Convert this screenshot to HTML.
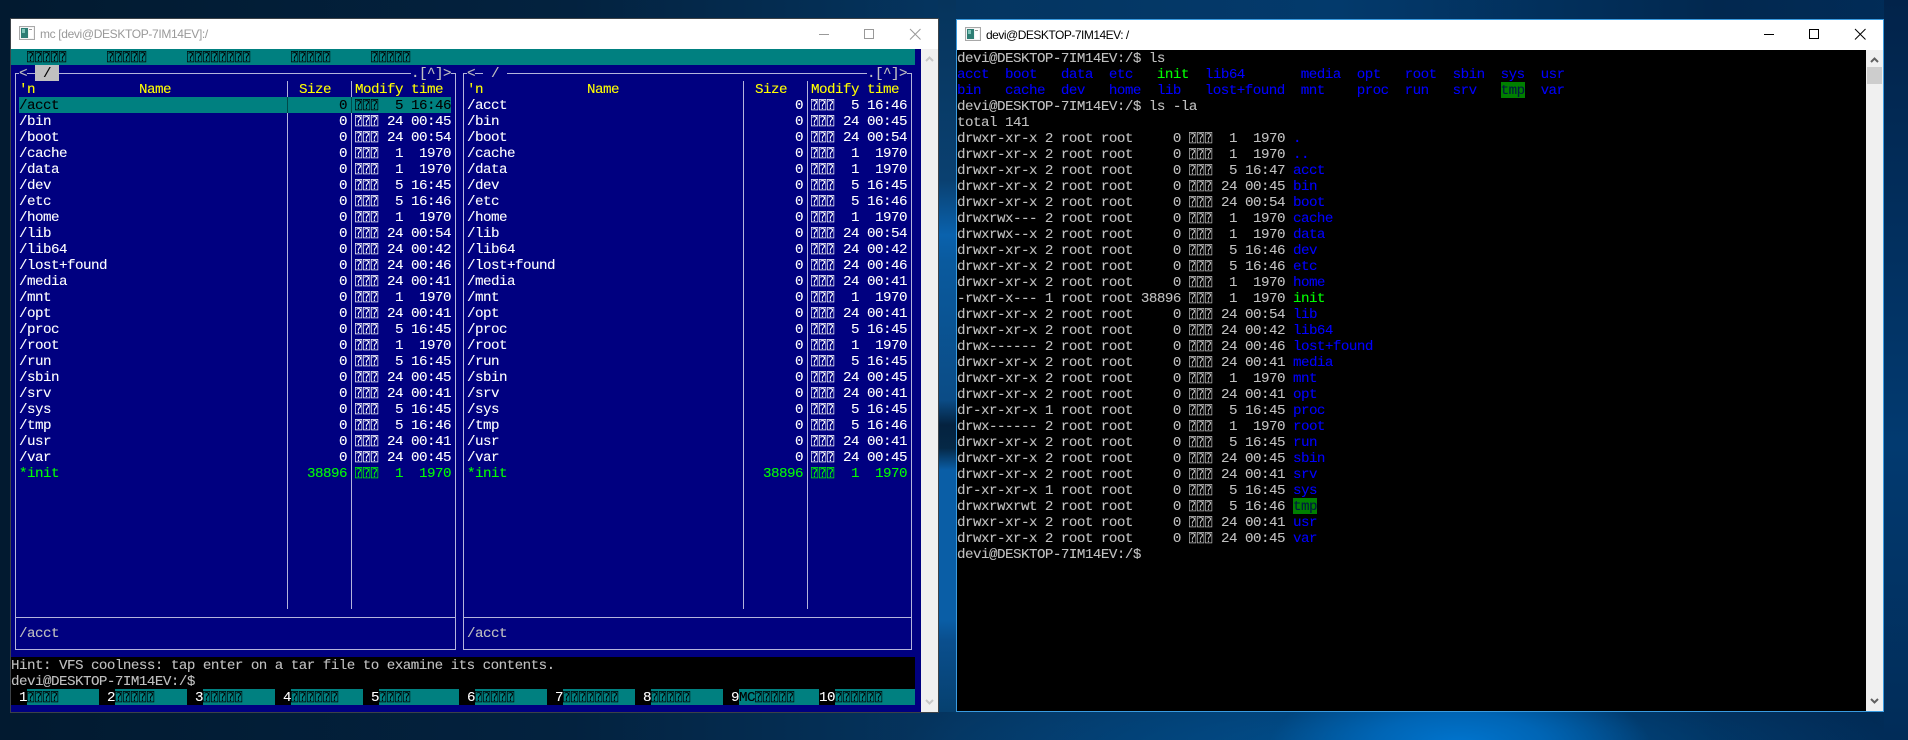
<!DOCTYPE html>
<html><head><meta charset="utf-8"><title>mc</title>
<style>
html,body{margin:0;padding:0;width:1908px;height:740px;overflow:hidden;background:#03213f}
#bg{position:absolute;left:0;top:0;width:1908px;height:740px;background:
radial-gradient(ellipse 190px 70px at 1460px 745px,#0075cf 0%,#0065b5 45%,rgba(0,80,150,0) 100%),
radial-gradient(ellipse 500px 90px at 1400px 750px,#00508f 0%,rgba(0,70,130,0) 100%),
linear-gradient(90deg,#021a30 0%,#03223f 30%,#053560 50%,#033a6c 70%,#02284f 90%,#012c58 100%)}
#gap{position:absolute;left:938px;top:0;width:18px;height:712px;background:linear-gradient(180deg,#06345c 0,#0a4070 180px,#0a62ad 235px,#0a5a9e 262px,#0b4c86 400px,#04223f 425px,#052846 448px,#0a5ea6 470px,#0a5ea6 620px,#0a4f8e 640px,#06406f 712px)}
#edge{position:absolute;left:1884px;top:0;width:24px;height:740px;background:linear-gradient(180deg,#02234a 0,#023a70 60%,#012c58 100%)}
pre{position:absolute;margin:1px 0 0;font:14.2px/16px "Liberation Mono","DejaVu Sans Mono",monospace;letter-spacing:-.52px;white-space:pre;color:#c0c0c0;-webkit-text-stroke:.1px currentColor}
.d{position:absolute}
.w{position:absolute;background:#fff}
pre.t{font-family:"DejaVu Sans Mono","Liberation Mono",monospace;font-size:12px;letter-spacing:.78px;margin-top:0;-webkit-text-stroke:0}
.l{position:absolute;background:#b4b4dc}
.y{color:#ff0}
.wh{color:#fff}
.k{color:#000}
.g{color:#0f0}
.b{color:#00f}
.n{color:#001a40}
.ttl{position:absolute;font:12px/16px "Liberation Sans",sans-serif;white-space:pre}
svg{position:absolute}
</style></head><body>
<div id="bg"></div><div id="gap"></div><div id="edge"></div>

<!-- LEFT WINDOW -->
<div class="w" style="left:10px;top:18px;border:1px solid #3c4248;width:927px;height:693px"></div>
<div class="d" style="left:11px;top:49px;width:910px;height:663px;background:#000080"></div>
<div class="d" style="left:921px;top:49px;width:17px;height:663px;background:#f0f0f0"></div>
<svg style="left:19px;top:26px" width="16" height="14" viewBox="0 0 16 14"><rect x=".5" y=".5" width="15" height="13" fill="#f4f4f4" stroke="#a8a8a8"/><rect x="2" y="2" width="7" height="10" fill="#2e7d74"/><rect x="3" y="3" width="3" height="4" fill="#7fc4b8"/><rect x="10" y="2" width="4" height="10" fill="#fff"/><rect x="10" y="3" width="3" height="1" fill="#999"/></svg>
<div class="ttl" style="left:40px;top:26px;color:#999;letter-spacing:-.35px">mc [devi@DESKTOP-7IM14EV]:/</div>
<svg style="left:815px;top:25px" width="110" height="18" viewBox="815 25 110 18" fill="none" stroke="#999"><path d="M819 34.500h10"/><rect x="864.500" y="29.500" width="9" height="9"/><path d="M910 29l10.500 10.500M920.500 29L910 39.500"/></svg>
<svg style="left:921px;top:49px" width="17" height="663" fill="none" stroke="#c8c8c8" stroke-width="2"><path d="M5 12l3.500-3.500L12 12"/><path d="M5 651l3.500 3.500L12 651"/></svg>

<!-- menu -->
<div class="d" style="left:11px;top:49px;width:904px;height:16px;background:#008080"></div>
<pre class="t k" style="left:27px;top:49px">⍰⍰⍰⍰⍰</pre><pre class="t k" style="left:107px;top:49px">⍰⍰⍰⍰⍰</pre><pre class="t k" style="left:187px;top:49px">⍰⍰⍰⍰⍰⍰⍰⍰</pre><pre class="t k" style="left:291px;top:49px">⍰⍰⍰⍰⍰</pre><pre class="t k" style="left:371px;top:49px">⍰⍰⍰⍰⍰</pre>

<!-- panel 1 frame -->
<div class="l" style="left:15px;top:73px;width:1px;height:577px"></div>
<div class="l" style="left:455px;top:73px;width:1px;height:577px"></div>
<div class="l" style="left:15px;top:73px;width:4px;height:1px"></div>
<div class="l" style="left:27px;top:73px;width:8px;height:1px"></div>
<div class="l" style="left:59px;top:73px;width:352px;height:1px"></div>
<div class="l" style="left:451px;top:73px;width:5px;height:1px"></div>
<div class="l" style="left:15px;top:617px;width:441px;height:1px"></div>
<div class="l" style="left:15px;top:649px;width:441px;height:1px"></div>
<div class="d" style="left:35px;top:65px;width:24px;height:16px;background:#c0c0c0"></div>
<div class="d" style="left:19px;top:97px;width:432px;height:16px;background:#008080"></div>
<div class="l" style="left:287px;top:81px;width:1px;height:528px"></div>
<div class="l" style="left:351px;top:81px;width:1px;height:528px"></div>
<div class="d" style="left:287px;top:97px;width:1px;height:16px;background:#004a4a"></div>
<div class="d" style="left:351px;top:97px;width:1px;height:16px;background:#004a4a"></div>
<pre style="left:19px;top:65px">&lt;</pre><pre class="k" style="left:35px;top:65px"> / </pre><pre style="left:411px;top:65px">.[^]&gt;</pre>
<pre class="y" style="left:19px;top:81px">'n</pre><pre class="y" style="left:139px;top:81px">Name</pre><pre class="y" style="left:299px;top:81px">Size</pre><pre class="y" style="left:355px;top:81px">Modify</pre><pre class="y" style="left:411px;top:81px">time</pre>
<pre class="wh" style="left:19px;top:97px"><span class="k">/acct</span>
/bin
/boot
/cache
/data
/dev
/etc
/home
/lib
/lib64
/lost+found
/media
/mnt
/opt
/proc
/root
/run
/sbin
/srv
/sys
/tmp
/usr
/var
<span class="g">*init</span></pre>
<pre class="wh" style="left:291px;top:97px;text-align:right;width:56px"><span class="k">0</span>
0
0
0
0
0
0
0
0
0
0
0
0
0
0
0
0
0
0
0
0
0
0
<span class="g">38896</span></pre>
<pre class="t wh" style="left:355px;top:97px"><span class="k">⍰⍰⍰</span>
⍰⍰⍰
⍰⍰⍰
⍰⍰⍰
⍰⍰⍰
⍰⍰⍰
⍰⍰⍰
⍰⍰⍰
⍰⍰⍰
⍰⍰⍰
⍰⍰⍰
⍰⍰⍰
⍰⍰⍰
⍰⍰⍰
⍰⍰⍰
⍰⍰⍰
⍰⍰⍰
⍰⍰⍰
⍰⍰⍰
⍰⍰⍰
⍰⍰⍰
⍰⍰⍰
⍰⍰⍰
<span class="g">⍰⍰⍰</span></pre>
<pre class="wh" style="left:387px;top:97px"><span class="k"> 5 16:46</span>
24 00:45
24 00:54
 1  1970
 1  1970
 5 16:45
 5 16:46
 1  1970
24 00:54
24 00:42
24 00:46
24 00:41
 1  1970
24 00:41
 5 16:45
 1  1970
 5 16:45
24 00:45
24 00:41
 5 16:45
 5 16:46
24 00:41
24 00:45
<span class="g"> 1  1970</span></pre>
<pre style="left:19px;top:625px">/acct</pre>

<!-- panel 2 frame -->
<div class="l" style="left:463px;top:73px;width:1px;height:577px"></div>
<div class="l" style="left:911px;top:73px;width:1px;height:577px"></div>
<div class="l" style="left:463px;top:73px;width:4px;height:1px"></div>
<div class="l" style="left:475px;top:73px;width:8px;height:1px"></div>
<div class="l" style="left:507px;top:73px;width:360px;height:1px"></div>
<div class="l" style="left:907px;top:73px;width:5px;height:1px"></div>
<div class="l" style="left:463px;top:617px;width:449px;height:1px"></div>
<div class="l" style="left:463px;top:649px;width:449px;height:1px"></div>
<div class="l" style="left:743px;top:81px;width:1px;height:528px"></div>
<div class="l" style="left:807px;top:81px;width:1px;height:528px"></div>
<pre style="left:467px;top:65px">&lt;</pre><pre style="left:491px;top:65px">/</pre><pre style="left:867px;top:65px">.[^]&gt;</pre>
<pre class="y" style="left:467px;top:81px">'n</pre><pre class="y" style="left:587px;top:81px">Name</pre><pre class="y" style="left:755px;top:81px">Size</pre><pre class="y" style="left:811px;top:81px">Modify</pre><pre class="y" style="left:867px;top:81px">time</pre>
<pre class="wh" style="left:467px;top:97px">/acct
/bin
/boot
/cache
/data
/dev
/etc
/home
/lib
/lib64
/lost+found
/media
/mnt
/opt
/proc
/root
/run
/sbin
/srv
/sys
/tmp
/usr
/var
<span class="g">*init</span></pre>
<pre class="wh" style="left:747px;top:97px;text-align:right;width:56px">0
0
0
0
0
0
0
0
0
0
0
0
0
0
0
0
0
0
0
0
0
0
0
<span class="g">38896</span></pre>
<pre class="t wh" style="left:811px;top:97px">⍰⍰⍰
⍰⍰⍰
⍰⍰⍰
⍰⍰⍰
⍰⍰⍰
⍰⍰⍰
⍰⍰⍰
⍰⍰⍰
⍰⍰⍰
⍰⍰⍰
⍰⍰⍰
⍰⍰⍰
⍰⍰⍰
⍰⍰⍰
⍰⍰⍰
⍰⍰⍰
⍰⍰⍰
⍰⍰⍰
⍰⍰⍰
⍰⍰⍰
⍰⍰⍰
⍰⍰⍰
⍰⍰⍰
<span class="g">⍰⍰⍰</span></pre>
<pre class="wh" style="left:843px;top:97px"> 5 16:46
24 00:45
24 00:54
 1  1970
 1  1970
 5 16:45
 5 16:46
 1  1970
24 00:54
24 00:42
24 00:46
24 00:41
 1  1970
24 00:41
 5 16:45
 1  1970
 5 16:45
24 00:45
24 00:41
 5 16:45
 5 16:46
24 00:41
24 00:45
<span class="g"> 1  1970</span></pre>
<pre style="left:467px;top:625px">/acct</pre>

<!-- hint / prompt / buttons -->
<div class="d" style="left:11px;top:657px;width:904px;height:48px;background:#000"></div>
<pre style="left:11px;top:657px">Hint: VFS coolness: tap enter on a tar file to examine its contents.
devi@DESKTOP-7IM14EV:/$</pre>
<div class="d" style="left:27px;top:689px;width:72px;height:16px;background:#008080"></div>
<div class="d" style="left:115px;top:689px;width:72px;height:16px;background:#008080"></div>
<div class="d" style="left:203px;top:689px;width:72px;height:16px;background:#008080"></div>
<div class="d" style="left:291px;top:689px;width:72px;height:16px;background:#008080"></div>
<div class="d" style="left:379px;top:689px;width:80px;height:16px;background:#008080"></div>
<div class="d" style="left:475px;top:689px;width:72px;height:16px;background:#008080"></div>
<div class="d" style="left:563px;top:689px;width:72px;height:16px;background:#008080"></div>
<div class="d" style="left:651px;top:689px;width:72px;height:16px;background:#008080"></div>
<div class="d" style="left:739px;top:689px;width:80px;height:16px;background:#008080"></div>
<div class="d" style="left:835px;top:689px;width:80px;height:16px;background:#008080"></div>
<pre class="wh" style="left:19px;top:689px">1</pre><pre class="t k" style="left:27px;top:689px">⍰⍰⍰⍰</pre>
<pre class="wh" style="left:107px;top:689px">2</pre><pre class="t k" style="left:115px;top:689px">⍰⍰⍰⍰⍰</pre>
<pre class="wh" style="left:195px;top:689px">3</pre><pre class="t k" style="left:203px;top:689px">⍰⍰⍰⍰⍰</pre>
<pre class="wh" style="left:283px;top:689px">4</pre><pre class="t k" style="left:291px;top:689px">⍰⍰⍰⍰⍰⍰</pre>
<pre class="wh" style="left:371px;top:689px">5</pre><pre class="t k" style="left:379px;top:689px">⍰⍰⍰⍰</pre>
<pre class="wh" style="left:467px;top:689px">6</pre><pre class="t k" style="left:475px;top:689px">⍰⍰⍰⍰⍰</pre>
<pre class="wh" style="left:555px;top:689px">7</pre><pre class="t k" style="left:563px;top:689px">⍰⍰⍰⍰⍰⍰⍰</pre>
<pre class="wh" style="left:643px;top:689px">8</pre><pre class="t k" style="left:651px;top:689px">⍰⍰⍰⍰⍰</pre>
<pre class="wh" style="left:731px;top:689px">9</pre><pre class="k" style="left:739px;top:689px">MC</pre><pre class="t k" style="left:755px;top:689px">⍰⍰⍰⍰⍰</pre>
<pre class="wh" style="left:819px;top:689px">10</pre><pre class="t k" style="left:835px;top:689px">⍰⍰⍰⍰⍰⍰</pre>

<!-- RIGHT WINDOW -->
<div class="w" style="left:956px;top:19px;width:926px;height:691px;border:1px solid #3a9be0"></div>
<div class="d" style="left:957px;top:50px;width:909px;height:661px;background:#000"></div>
<div class="d" style="left:1866px;top:50px;width:17px;height:661px;background:#f0f0f0"></div>
<div class="d" style="left:1867px;top:67px;width:15px;height:17px;background:#cdcdcd"></div>
<svg style="left:965px;top:27px" width="16" height="14" viewBox="0 0 16 14"><rect x=".5" y=".5" width="15" height="13" fill="#f4f4f4" stroke="#a8a8a8"/><rect x="2" y="2" width="7" height="10" fill="#2e7d74"/><rect x="3" y="3" width="3" height="4" fill="#7fc4b8"/><rect x="10" y="2" width="4" height="10" fill="#fff"/><rect x="10" y="3" width="3" height="1" fill="#999"/></svg>
<div class="ttl" style="left:986px;top:27px;color:#000;letter-spacing:-.5px">devi@DESKTOP-7IM14EV: /</div>
<svg style="left:1760px;top:25px" width="110" height="18" viewBox="1760 25 110 18" fill="none" stroke="#000"><path d="M1764 34.500h10"/><rect x="1809.500" y="29.500" width="9" height="9"/><path d="M1855 29l10.500 10.500M1865.500 29L1855 39.500"/></svg>
<svg style="left:1866px;top:50px" width="17" height="661" fill="none" stroke="#606060" stroke-width="2"><path d="M5 12l3.500-3.500L12 12"/><path d="M5 649l3.500 3.500L12 649"/></svg>

<div class="d" style="left:1501px;top:82px;width:24px;height:16px;background:#008000"></div>
<div class="d" style="left:1293px;top:498px;width:24px;height:16px;background:#008000"></div>

<pre style="left:957px;top:50px">devi@DESKTOP-7IM14EV:/$ ls
<span class="b">acct  boot   data  etc   </span><span class="g">init</span><span class="b">  lib64       media  opt   root  sbin  sys  usr</span>
<span class="b">bin   cache  dev   home  lib   lost+found  mnt    proc  run   srv   </span><span class="n">tmp</span><span class="b">  var</span>
devi@DESKTOP-7IM14EV:/$ ls -la
total 141
drwxr-xr-x 2 root root     0
drwxr-xr-x 2 root root     0
drwxr-xr-x 2 root root     0
drwxr-xr-x 2 root root     0
drwxr-xr-x 2 root root     0
drwxrwx--- 2 root root     0
drwxrwx--x 2 root root     0
drwxr-xr-x 2 root root     0
drwxr-xr-x 2 root root     0
drwxr-xr-x 2 root root     0
-rwxr-x--- 1 root root 38896
drwxr-xr-x 2 root root     0
drwxr-xr-x 2 root root     0
drwx------ 2 root root     0
drwxr-xr-x 2 root root     0
drwxr-xr-x 2 root root     0
drwxr-xr-x 2 root root     0
dr-xr-xr-x 1 root root     0
drwx------ 2 root root     0
drwxr-xr-x 2 root root     0
drwxr-xr-x 2 root root     0
drwxr-xr-x 2 root root     0
dr-xr-xr-x 1 root root     0
drwxrwxrwt 2 root root     0
drwxr-xr-x 2 root root     0
drwxr-xr-x 2 root root     0
devi@DESKTOP-7IM14EV:/$</pre>
<pre class="t" style="left:1189px;top:130px">⍰⍰⍰
⍰⍰⍰
⍰⍰⍰
⍰⍰⍰
⍰⍰⍰
⍰⍰⍰
⍰⍰⍰
⍰⍰⍰
⍰⍰⍰
⍰⍰⍰
⍰⍰⍰
⍰⍰⍰
⍰⍰⍰
⍰⍰⍰
⍰⍰⍰
⍰⍰⍰
⍰⍰⍰
⍰⍰⍰
⍰⍰⍰
⍰⍰⍰
⍰⍰⍰
⍰⍰⍰
⍰⍰⍰
⍰⍰⍰
⍰⍰⍰
⍰⍰⍰</pre>
<pre style="left:1221px;top:130px"> 1  1970 <span class="b">.</span>
 1  1970 <span class="b">..</span>
 5 16:47 <span class="b">acct</span>
24 00:45 <span class="b">bin</span>
24 00:54 <span class="b">boot</span>
 1  1970 <span class="b">cache</span>
 1  1970 <span class="b">data</span>
 5 16:46 <span class="b">dev</span>
 5 16:46 <span class="b">etc</span>
 1  1970 <span class="b">home</span>
 1  1970 <span class="g">init</span>
24 00:54 <span class="b">lib</span>
24 00:42 <span class="b">lib64</span>
24 00:46 <span class="b">lost+found</span>
24 00:41 <span class="b">media</span>
 1  1970 <span class="b">mnt</span>
24 00:41 <span class="b">opt</span>
 5 16:45 <span class="b">proc</span>
 1  1970 <span class="b">root</span>
 5 16:45 <span class="b">run</span>
24 00:45 <span class="b">sbin</span>
24 00:41 <span class="b">srv</span>
 5 16:45 <span class="b">sys</span>
 5 16:46 <span class="n">tmp</span>
24 00:41 <span class="b">usr</span>
24 00:45 <span class="b">var</span></pre>
</body></html>
